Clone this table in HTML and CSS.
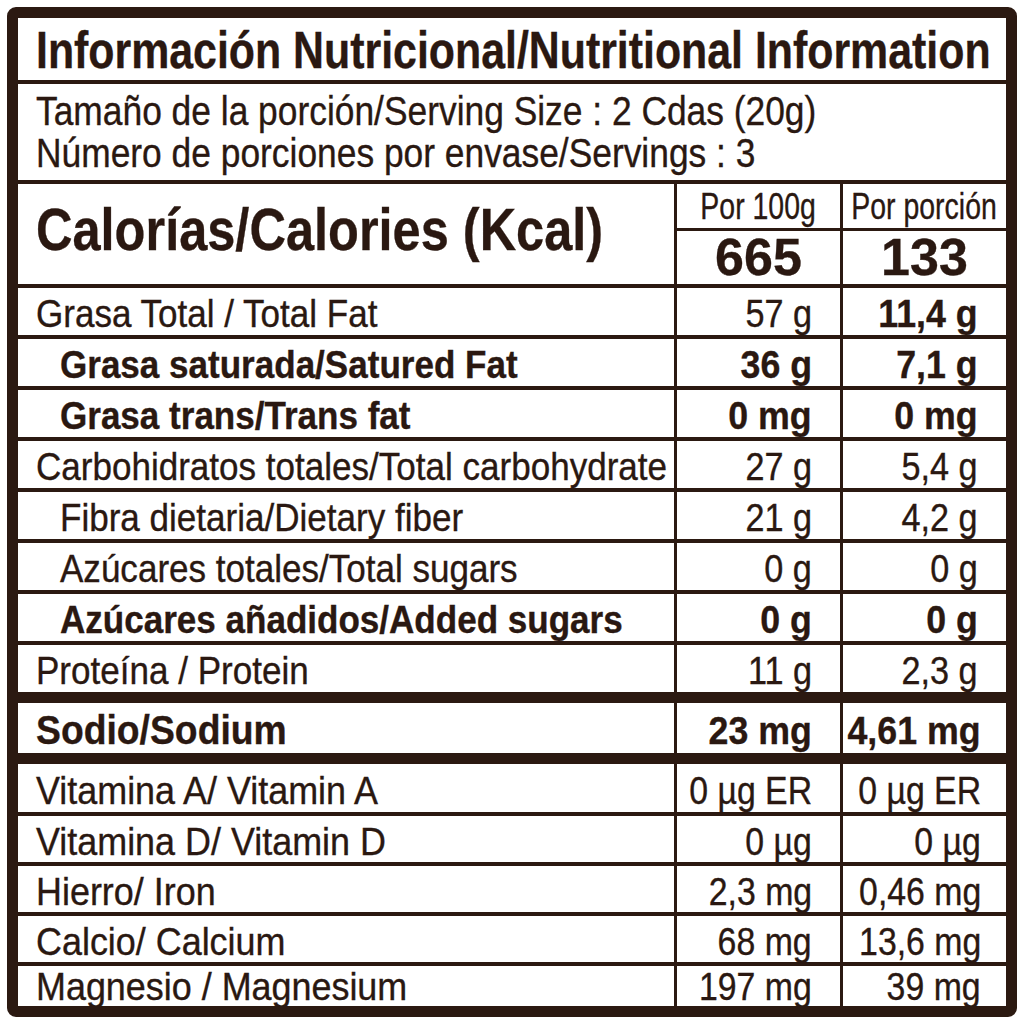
FILE: index.html
```html
<!DOCTYPE html>
<html lang="es">
<head>
<meta charset="utf-8">
<title>Información Nutricional</title>
<link rel="stylesheet" href="styles.css">
</head>
<body>
<div class="label">
  <div class="title"><span>Información Nutricional/Nutritional Information</span></div>
  <div class="serving">
    <div class="serving-line"><span>Tamaño de la porción/Serving Size : 2 Cdas (20g)</span></div>
    <div class="serving-line"><span>Número de porciones por envase/Servings : 3</span></div>
  </div>
  <div class="cal">
    <div class="cal-label"><span>Calorías/Calories (Kcal)</span></div>
    <div class="cal-col">
      <div class="cal-head"><span>Por 100g</span></div>
      <div class="cal-num"><span>665</span></div>
    </div>
    <div class="cal-col">
      <div class="cal-head"><span>Por porción</span></div>
      <div class="cal-num"><span>133</span></div>
    </div>
  </div>
  <div class="rows">
    <div class="row"><div class="name"><span>Grasa Total / Total Fat</span></div><div class="val"><span>57 g</span></div><div class="val bold"><span>11,4 g</span></div></div>
    <div class="row"><div class="name indent bold"><span>Grasa saturada/Satured Fat</span></div><div class="val bold"><span>36 g</span></div><div class="val bold"><span>7,1 g</span></div></div>
    <div class="row"><div class="name indent bold"><span>Grasa trans/Trans fat</span></div><div class="val bold"><span>0 mg</span></div><div class="val bold"><span>0 mg</span></div></div>
    <div class="row"><div class="name"><span>Carbohidratos totales/Total carbohydrate</span></div><div class="val"><span>27 g</span></div><div class="val"><span>5,4 g</span></div></div>
    <div class="row"><div class="name indent"><span>Fibra dietaria/Dietary fiber</span></div><div class="val"><span>21 g</span></div><div class="val"><span>4,2 g</span></div></div>
    <div class="row"><div class="name indent"><span>Azúcares totales/Total sugars</span></div><div class="val"><span>0 g</span></div><div class="val"><span>0 g</span></div></div>
    <div class="row"><div class="name indent bold"><span>Azúcares añadidos/Added sugars</span></div><div class="val bold"><span>0 g</span></div><div class="val bold"><span>0 g</span></div></div>
    <div class="row"><div class="name"><span>Proteína / Protein</span></div><div class="val"><span>11 g</span></div><div class="val"><span>2,3 g</span></div></div>
  </div>
  <div class="row sodium"><div class="name bold sodium-name"><span>Sodio/Sodium</span></div><div class="val bold"><span>23 mg</span></div><div class="val bold tight"><span>4,61 mg</span></div></div>
  <div class="rows vit">
    <div class="row"><div class="name"><span>Vitamina A/ Vitamin A</span></div><div class="val"><span>0 µg ER</span></div><div class="val tight"><span>0 µg ER</span></div></div>
    <div class="row"><div class="name"><span>Vitamina D/ Vitamin D</span></div><div class="val"><span>0 µg</span></div><div class="val tight"><span>0 µg</span></div></div>
    <div class="row"><div class="name"><span>Hierro/ Iron</span></div><div class="val"><span>2,3 mg</span></div><div class="val tight"><span>0,46 mg</span></div></div>
    <div class="row"><div class="name"><span>Calcio/ Calcium</span></div><div class="val"><span>68 mg</span></div><div class="val tight"><span>13,6 mg</span></div></div>
    <div class="row"><div class="name"><span>Magnesio / Magnesium</span></div><div class="val"><span>197 mg</span></div><div class="val tight"><span>39 mg</span></div></div>
  </div>
</div>
</body>
</html>
```

FILE: styles.css
```css
* { box-sizing: border-box; }
html, body { margin: 0; padding: 0; background: #ffffff; }
body {
  font-family: "Liberation Sans", Arial, sans-serif;
  color: #2a1811;
  -webkit-text-stroke: 0.35px #2a1811;
}
span { display: inline-block; white-space: nowrap; }
.label {
  margin: 7px 0 0 7px;
  width: 1010px;
  height: 1010px;
  border: 11px solid #2b1911;
  border-radius: 9px;
  display: flex;
  flex-direction: column;
  overflow: hidden;
}
.title {
  height: 66px;
  border-bottom: 4px solid #2b1911;
  padding: 3px 0 0 18px;
  font-size: 52px;
  font-weight: 700;
  line-height: 58px;
  white-space: nowrap;
}
.title span { transform: scaleX(0.824); transform-origin: left center; }
.serving {
  height: 101px;
  border-bottom: 4px solid #2b1911;
  padding: 6px 0 0 18px;
  font-size: 40px;
  line-height: 42px;
  white-space: nowrap;
}
.serving span { transform: scaleX(0.884); transform-origin: left center; }
.cal {
  height: 104px;
  border-bottom: 4px solid #2b1911;
  display: grid;
  grid-template-columns: 656px 166px 166px;
}
.cal-label {
  display: flex;
  align-items: center;
  padding: 0 0 12px 18px;
  font-size: 60px;
  font-weight: 700;
  white-space: nowrap;
}
.cal-label span { transform: scaleX(0.842); transform-origin: left center; }
.cal-col {
  border-left: 3px solid #2b1911;
  display: flex;
  flex-direction: column;
}
.cal-head {
  height: 47px;
  border-bottom: 3px solid #2b1911;
  display: flex;
  align-items: center;
  justify-content: center;
  font-size: 36px;
  padding-top: 2px;
  white-space: nowrap;
}
.cal-head span { transform: scaleX(0.79); transform-origin: center center; }
.cal-num {
  flex: 1;
  display: flex;
  align-items: center;
  justify-content: center;
  font-size: 52px;
  line-height: 1;
  font-weight: 700;
  padding-bottom: 4px;
}
.row {
  display: grid;
  grid-template-columns: 656px 166px 166px;
  height: 51px;
  border-top: 4px solid #2b1911;
  font-size: 38px;
  line-height: 1;
  white-space: nowrap;
}
.rows .row:first-child { height: 47px; border-top: 0; }
.name {
  display: flex;
  align-items: center;
  padding: 5px 0 0 18px;
}
.name span { transform: scaleX(0.922); transform-origin: left center; }
.name.indent { padding-left: 42px; }
.val {
  border-left: 3px solid #2b1911;
  display: flex;
  align-items: center;
  justify-content: flex-end;
  padding: 5px 28px 0 0;
}
.val span { transform: scaleX(0.9); transform-origin: right center; }
.val.bold span { transform: scaleX(0.94); }
.bold { font-weight: 700; }
.sodium {
  height: 72px;
  border-top: 11px solid #2b1911;
  border-bottom: 11px solid #2b1911;
}
.sodium-name { font-size: 41px; }
.sodium-name span { transform: scaleX(0.91); }
.val.tight { padding-right: 25px; }
.vit { flex: 1; display: flex; flex-direction: column; }
.vit .row { height: 50px; }
.vit .row:first-child { height: 48px; }
.vit .row:last-child { flex: 1; height: auto; }
.vit .name span { transform: scaleX(0.945); }
.vit .val span { transform: scaleX(0.89); }
.vit .row:last-child .name,
.vit .row:last-child .val { padding-top: 2px; }
```
